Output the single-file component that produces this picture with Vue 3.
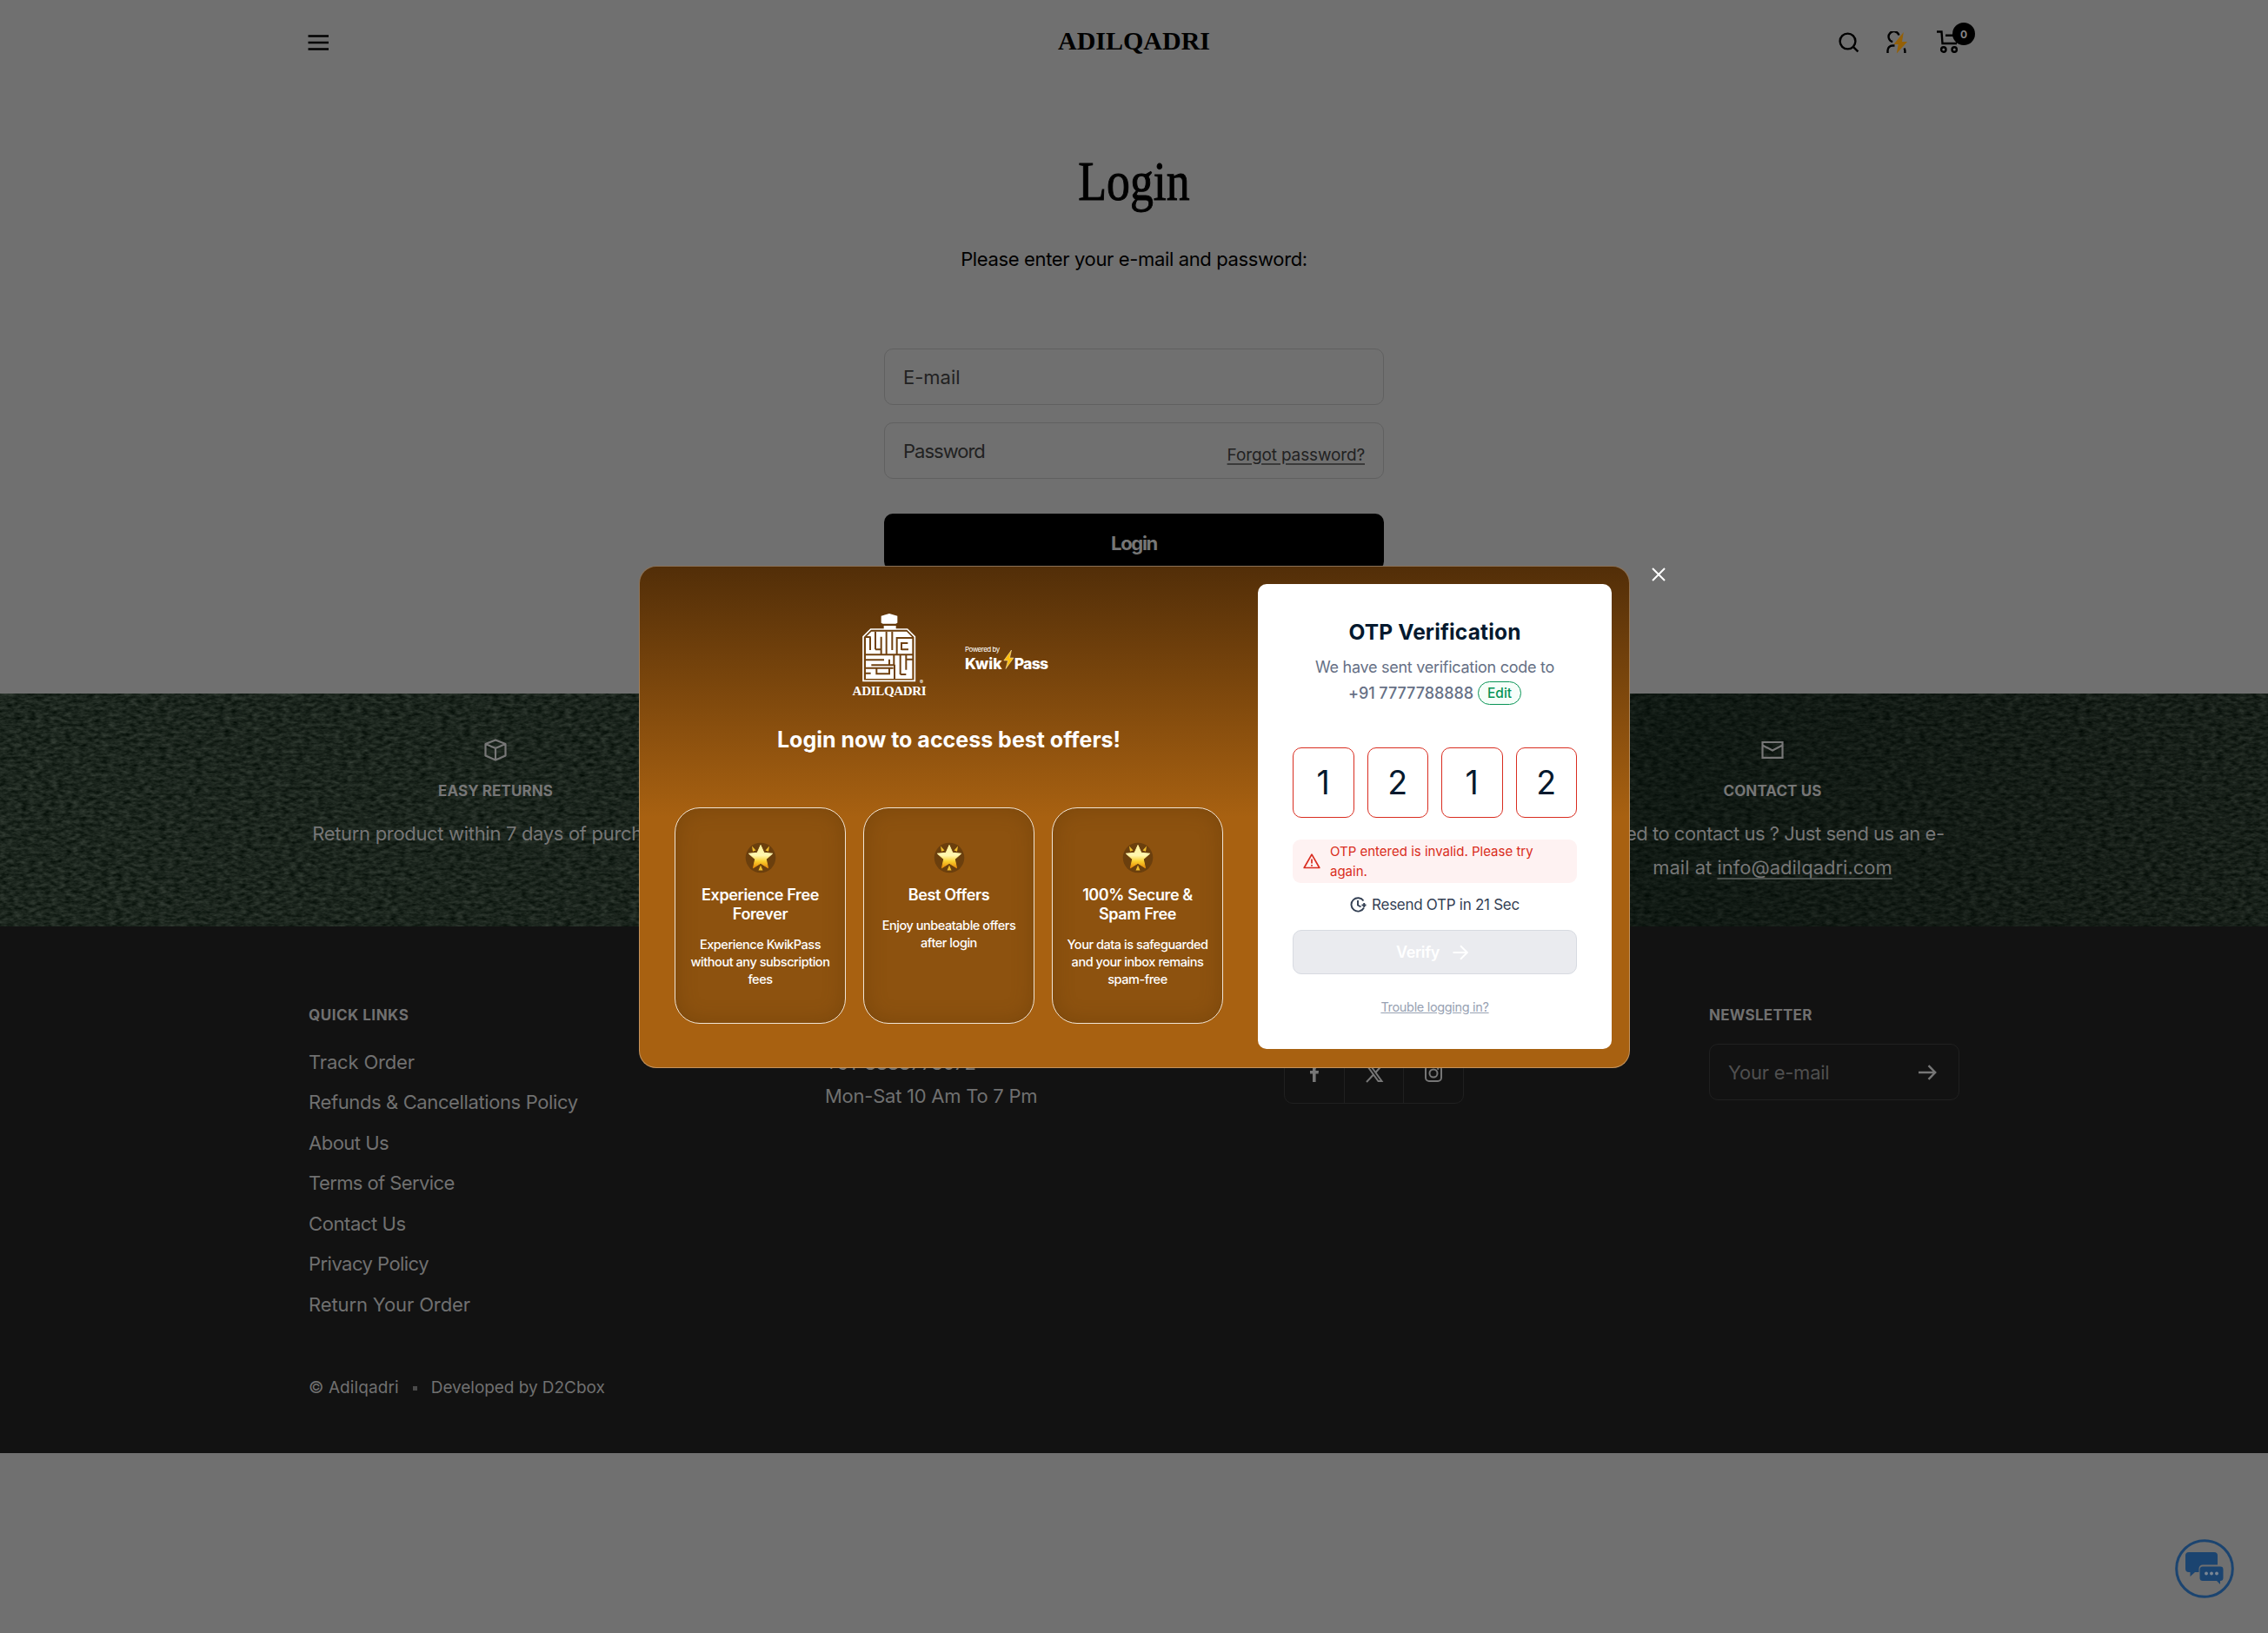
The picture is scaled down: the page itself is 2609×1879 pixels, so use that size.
<script setup>
const links = [
  { t: 'Track Order', ls: -0.17 },
  { t: 'Refunds & Cancellations Policy', ls: -0.38 },
  { t: 'About Us', ls: -0.5 },
  { t: 'Terms of Service', ls: -0.59 },
  { t: 'Contact Us', ls: -0.41 },
  { t: 'Privacy Policy', ls: -0.54 },
  { t: 'Return Your Order', ls: -0.12 },
]
const perks = [
  { title: ['Experience Free', 'Forever'], text: ['Experience KwikPass', 'without any subscription', 'fees'] },
  { title: ['Best Offers'], text: ['Enjoy unbeatable offers', 'after login'] },
  { title: ['100% Secure &', 'Spam Free'], text: ['Your data is safeguarded', 'and your inbox remains', 'spam-free'] },
]
const digits = ['1', '2', '1', '2']
</script>

<template>
  <div class="page">
    <header class="header">
      <svg class="menu" width="24" height="18" viewBox="0 0 24 18"><path d="M.5 1.500H24M.5 9H24M.5 16.500H24" stroke="#000" stroke-width="2.400" /></svg>
      <div class="brand">ADILQADRI</div>
      <div class="tools">
        <svg width="24" height="24" viewBox="0 0 24 24" fill="none" stroke="#000" stroke-width="2.400"><circle cx="10.500" cy="10.500" r="8.900" /><path d="M16.800 16.800l5.600 5.600" /></svg>
        <svg width="26" height="26" viewBox="0 0 26 26" fill="none" stroke="#000" stroke-width="2.400"><path d="M8.200 12.200A6.100 6.100 0 1 1 15.500 4.500" /><path d="M2.500 25v-3a5.500 5.500 0 0 1 5.500-5.500h2.500M21.500 19.500q.9 1.500.9 3v2.500" /><path d="M20.800 1 9.500 15h5.200L12.800 25.500 25 12h-6z" fill="#946008" stroke="none" /></svg>
        <div class="cart">
          <svg width="28" height="27" viewBox="0 0 28 27" fill="none" stroke="#000" stroke-width="2.400"><path d="M0 1.500h5.500l1 13.500h16.500M10 5.800h13" /><circle cx="7.800" cy="22" r="2.700" /><circle cx="20.200" cy="22" r="2.700" /></svg>
          <span class="badge">0</span>
        </div>
      </div>
    </header>

    <main class="login">
      <h1>Login</h1>
      <p class="lead">Please enter your e-mail and password:</p>
      <form class="form" @submit.prevent>
        <div class="field"><span>E-mail</span></div>
        <div class="field"><span class="pw">Password</span><a class="forgot">Forgot password?</a></div>
        <button class="submit">Login</button>
      </form>
    </main>

    <section class="band">
      <svg class="leather" width="2609" height="268" preserveAspectRatio="none">
        <defs>
          <filter id="grain" x="0" y="0" width="100%" height="100%" color-interpolation-filters="sRGB">
            <feTurbulence type="fractalNoise" baseFrequency="0.12 0.26" numOctaves="3" seed="8" />
            <feColorMatrix type="matrix" values=".24 .05 0 0 -.035  .24 .05 0 0 .004  .23 .05 0 0 -.022  0 0 0 0 1" />
          </filter>
          <linearGradient id="shade"><stop offset="0" stop-color="#000" stop-opacity="0" /><stop offset=".3" stop-color="#000" stop-opacity=".05" /><stop offset=".74" stop-color="#000805" stop-opacity=".42" /><stop offset="1" stop-color="#000" stop-opacity=".15" /></linearGradient>
        </defs>
        <rect width="2609" height="268" filter="url(#grain)" />
        <rect width="2609" height="268" fill="url(#shade)" />
      </svg>
      <div class="features">
        <div class="feature">
          <svg width="26" height="26" viewBox="0 0 26 26" fill="none" stroke="#767676" stroke-width="2.200" stroke-linejoin="round"><path d="M13 1.500 24.500 6v13.500L13 24.500 1.500 19.500V6zM1.500 6 13 11l11.500-5M13 11v13.500" /></svg>
          <h3>EASY RETURNS</h3>
          <p>Return product within 7 days of purchase.</p>
        </div>
        <div class="feature last">
          <svg width="26" height="26" viewBox="0 0 26 26" fill="none" stroke="#767676" stroke-width="2.200"><path d="M1.500 4h23v17.800h-23zM1.500 7.500 13 13.500l11.500-6" /></svg>
          <h3>CONTACT US</h3>
          <p>Need to contact us ? Just send us an e-<br /><span class="mailto">mail at <u>info@adilqadri.com</u></span></p>
        </div>
      </div>
    </section>

    <footer class="footer">
      <div class="cols">
        <div class="col quick">
          <h4>QUICK LINKS</h4>
          <ul><li v-for="l in links" :key="l.t" :style="{ letterSpacing: l.ls + 'px' }">{{ l.t }}</li></ul>
        </div>
        <div class="col hours"><p class="tel">+91-8888778072</p><p>Mon-Sat 10 Am To 7 Pm</p></div>
        <div class="col social">
          <span><svg width="22" height="22" viewBox="0 0 22 22"><path d="M9 21v-9.500H6V8h3V5.500Q9 1.500 13 1.500h3v3.200h-2q-1.500 0-1.500 1.500V8H16l-.4 3.500h-3V21z" fill="#767676" /></svg></span>
          <span><svg width="22" height="22" viewBox="0 0 22 22" fill="none" stroke="#767676" stroke-width="2"><path d="M2.500 2h4l13 18h-4zM20 1.500 12 10.500M9.500 13 2 21" /></svg></span>
          <span><svg width="22" height="22" viewBox="0 0 22 22" fill="none" stroke="#767676" stroke-width="2"><rect x="2" y="2" width="18" height="18" rx="4" /><circle cx="11" cy="11" r="4.500" /><circle cx="16.200" cy="5.800" r=".8" fill="#767676" stroke-width="1" /></svg></span>
        </div>
        <div class="col news">
          <h4>NEWSLETTER</h4>
          <div class="mail"><span>Your e-mail</span><svg width="21" height="18" viewBox="0 0 21 18" fill="none" stroke="#767676" stroke-width="2.400"><path d="M0 9h19M11.500 1.200 19.200 9l-7.700 7.800" /></svg></div>
        </div>
      </div>
      <div class="copy"><span>© Adilqadri</span><i></i><span>Developed by D2Cbox</span></div>
    </footer>

    <svg class="chat" width="70" height="70" viewBox="0 0 70 70"><circle cx="35" cy="35" r="32.300" fill="none" stroke="#1b4470" stroke-width="3" /><path d="M17 16h29a4 4 0 0 1 4 4v10.500H33a4.500 4.500 0 0 0-4.500 4.500v4H24l-5.500 5v-5H17a4 4 0 0 1-4-4V20a4 4 0 0 1 4-4z" fill="#1b4470" /><path d="M33 32.500h20a3.500 3.500 0 0 1 3.500 3.500v9.500A3.500 3.500 0 0 1 53 49v4l-4-4H33a3.500 3.500 0 0 1-3.500-3.500V36a3.500 3.500 0 0 1 3.500-3.500z" fill="#1b4470" /><g fill="#7b8794"><circle cx="37" cy="40.500" r="1.900" /><circle cx="43" cy="40.500" r="1.900" /><circle cx="49" cy="40.500" r="1.900" /></g></svg>

    <div class="modal">
      <section class="promo">
        <div class="logos">
          <div class="bottle">
            <svg width="64" height="81" viewBox="0 0 192 243">
              <path d="M68 8 96 0l28 8v24l-6 3H74l-6-3zM77 42h42v12H77z" fill="#fff" />
              <path d="M6 80 32 54h126l26 26v152H6z" fill="none" stroke="#fff" stroke-width="5" />
              <path d="M15 82 34 62h122l19 20v143H15z" fill="#fff" />
              <path d="M12 142h166M48 62v62M30 82v44M12 81h20M68 80v44H48M86 62v80M68 124v18M106 62v64M122 142V84h56M138 126v-24h22M138 124h24M12 160h66M34 178h78V142M96 158v18M12 188h98M114 176v50M134 142v68M134 210h20M154 158h24M154 142v52M12 206h20M52 188v20h44v-20" fill="none" stroke="#704110" stroke-width="6" />
            </svg>
            <b>ADILQADRI</b><sup>®</sup>
          </div>
          <div class="kwik">
            <small>Powered by</small>
            <div><b>Kwik</b><svg width="13" height="22" viewBox="0 0 13 22"><path d="M9.500 0 .8 12h4.700L3 21.500 12 9H7.500z" fill="#ffbe0a" stroke="#fff3c4" stroke-width=".5" /></svg><b class="pass">Pass</b></div>
          </div>
        </div>
        <h2>Login now to access best offers!</h2>
        <div class="perks">
          <article v-for="p in perks" :key="p.title[0]">
            <svg width="36" height="36" viewBox="0 0 36 36">
              <defs><linearGradient id="gold" x2="0" y2="1"><stop offset="0" stop-color="#fff3a0" /><stop offset=".45" stop-color="#fff7b0" /><stop offset=".7" stop-color="#fbd130" /><stop offset="1" stop-color="#e88a08" /></linearGradient></defs>
              <circle cx="18" cy="18" r="17.300" fill="#6b3f0d" />
              <path d="m18 3.500 3.900 8.800 9.700.9-7.300 6.500 2.200 10L18 24.300 9.500 29.700l2.200-10L4.400 13.200l9.700-.9z" fill="url(#gold)" stroke="url(#gold)" stroke-linejoin="round" />
              <path d="m8 4.500 4.500 5-3.500 1.200zM28 4.500l-4.500 5 3.500 1.200zM18 26.500l2.500 6h-5z" fill="#eebb2a" />
            </svg>
            <h3><template v-for="(t, i) in p.title" :key="t"><br v-if="i" />{{ t }}</template></h3>
            <p><template v-for="(t, i) in p.text" :key="t"><br v-if="i" />{{ t }}</template></p>
          </article>
        </div>
      </section>

      <section class="otp">
        <h2>OTP Verification</h2>
        <p class="sent">We have sent verification code to</p>
        <div class="phone"><b>+91 7777788888</b><button>Edit</button></div>
        <div class="digits"><span v-for="(d, i) in digits" :key="i">{{ d }}</span></div>
        <div class="error">
          <svg width="20" height="18" viewBox="0 0 20 18" fill="none" stroke="#d92d20" stroke-width="1.700" stroke-linejoin="round"><path d="M10 1.200 18.800 16.500H1.200zM10 6.500v5M10 13v1.700" /></svg>
          <p>OTP entered is invalid. Please try<br />again.</p>
        </div>
        <div class="resend">
          <svg width="19" height="18" viewBox="0 0 19 18" fill="none" stroke="#344054" stroke-width="1.900"><path d="M15.500 4.500A7.700 7.700 0 1 0 16 12.500M9 4v5.500l3.500 2M13.500 9.500h5M16.200 7v5" /></svg>
          <span>Resend OTP in 21 Sec</span>
        </div>
        <button class="verify"><span>Verify</span><svg width="18" height="18" viewBox="0 0 18 18" fill="none" stroke="#fff" stroke-width="2"><path d="M.5 9h16M9 1.200 16.800 9 9 16.800" /></svg></button>
        <a class="trouble">Trouble logging in?</a>
      </section>
      <svg class="close" width="16" height="16" viewBox="0 0 16 16" stroke="#fff" stroke-width="2"><path d="M1 1l14 14M15 1 1 15" /></svg>
    </div>
  </div>
</template>

<style>
body { margin: 0; background: #707070; }
</style>

<style scoped>
.page { position: relative; width: 2609px; height: 1879px; overflow: hidden; background: #707070; color: #000; font-family: Inter, "Liberation Sans", sans-serif; font-size: 22px; }
h1, h2, h3, h4, p, ul { margin: 0; padding: 0; font-weight: 400; white-space: nowrap; }
button { font: inherit; border: 0; padding: 0; }
svg { display: block; flex: none; }
span { white-space: nowrap; }

.header { box-sizing: border-box; height: 97px; padding: 0 354px; display: grid; grid-template-columns: 1fr auto 1fr; align-items: center; }
.brand { font: 700 30px/40px "Liberation Serif", serif; margin-top: -4px; }
.tools { display: flex; justify-content: flex-end; align-items: center; }
.tools > svg + svg { margin-left: 30px; }
.cart { position: relative; margin: 0 -1px 0 33px; width: 28px; }
.badge { position: absolute; left: 18px; top: -9px; width: 26px; height: 26px; border-radius: 50%; background: #000; color: #858585; font: 700 12px/27px Inter, sans-serif; text-align: center; }

.login { height: 701px; display: flex; flex-direction: column; align-items: center; }
.login h1 { margin-top: 72px; font: 400 64px/80px "Liberation Serif", serif; transform: scaleX(.84); -webkit-text-stroke: 1px #000; }
.lead { margin-top: 34px; line-height: 30px; letter-spacing: -.36px; }
.form { width: 575px; margin-top: 88px; display: flex; flex-direction: column; }
.field { box-sizing: border-box; height: 65px; margin-bottom: 20px; border: 1px solid #606060; border-radius: 10px; padding: 0 21px; display: flex; align-items: center; justify-content: space-between; color: #222; }
.pw { letter-spacing: -1px; }
.forgot { font-size: 19px; line-height: 24px; margin-top: 10px; letter-spacing: -.140px; text-decoration: underline; text-decoration-color: #3a3a3a; text-decoration-thickness: 1.500px; text-underline-offset: 3px; }
.submit { margin-top: 20px; height: 65px; padding-top: 2px; border-radius: 10px; background: #000; color: #767676; font-weight: 700; letter-spacing: -1.300px; }

.band { position: relative; height: 268px; background: #18231d; color: #767676; }
.leather { position: absolute; inset: 0; }
.features { position: relative; margin: 0 325px; display: flex; justify-content: space-between; text-align: center; }
.feature { width: 490px; padding-top: 52px; display: flex; flex-direction: column; align-items: center; }
.feature h3 { margin-top: 23px; font-size: 17px; line-height: 22px; font-weight: 700; letter-spacing: .1px; }
.feature p { margin-top: 19px; line-height: 39px; letter-spacing: -.32px; }
.feature.last p { letter-spacing: -.48px; }
.feature .mailto { letter-spacing: 0; }
.feature u { text-decoration-thickness: 1.500px; text-underline-offset: 4px; text-decoration-color: #4b514d; }

.footer { height: 606px; background: #121212; color: #707070; }
.cols { margin: 0 355px; padding-top: 90px; height: 439px; box-sizing: border-box; display: flex; align-items: flex-start; }
.col h4 { font-size: 17px; line-height: 24px; font-weight: 700; letter-spacing: .5px; }
.quick { width: 594px; }
.quick ul { list-style: none; margin-top: 18.500px; }
.quick li { line-height: 46.500px; }
.hours { width: 528px; padding-top: 47px; line-height: 39px; letter-spacing: -.25px; }
.hours .tel { padding-top: 1px; height: 38px; letter-spacing: -.44px; }
.social { box-sizing: border-box; display: flex; margin-top: 48px; width: 207px; height: 66px; padding-bottom: 2px; border: 1px solid #202020; border-radius: 10px; }
.social span { flex: 1; display: flex; align-items: center; justify-content: center; margin-bottom: -2px; padding-bottom: 4px; }
.social span + span { border-left: 1px solid #202020; }
.news { margin-left: auto; width: 288px; }
.news h4 { letter-spacing: .25px; }
.mail { box-sizing: border-box; height: 65px; margin-top: 21px; border: 1px solid #202020; border-radius: 10px; padding: 0 25px 0 21px; display: flex; align-items: center; justify-content: space-between; color: #4f4f4f; letter-spacing: -.25px; }
.copy { margin: 0 355px; padding-top: 80px; display: flex; align-items: center; font-size: 19px; line-height: 24px; letter-spacing: .1px; }
.copy i { width: 5px; height: 5px; background: #4a4a4a; margin: 0 16px; }
.copy i + span { letter-spacing: -.05px; }
.chat { position: absolute; left: 2501px; top: 1770px; }

.modal { position: absolute; left: 735px; top: 651px; box-sizing: border-box; width: 1140px; height: 578px; border: 1px solid rgba(255, 255, 255, .32); border-radius: 20px; background: linear-gradient(#522e08, #a86111 50%, #a86111) border-box; display: flex; color: #fff; }
.promo { width: 711px; display: flex; flex-direction: column; align-items: center; }
.logos { display: flex; width: 228px; margin: 54px 0 0 5px; height: 101px; justify-content: space-between; }
.bottle { position: relative; width: 86px; display: flex; flex-direction: column; align-items: center; }
.bottle b { font: 700 15px/16px "Liberation Serif", serif; letter-spacing: -.3px; }
.bottle sup { position: absolute; right: 4px; top: 75px; font-size: 6px; line-height: 8px; }
.kwik { width: 98px; padding-top: 36px; }
.kwik small { display: block; font-size: 8px; line-height: 10px; letter-spacing: -.5px; }
.kwik div { display: flex; align-items: center; font-size: 17.500px; line-height: 20px; height: 20px; font-weight: 800; }
.kwik div b { margin-top: 3px; font-weight: 800; letter-spacing: .1px; }
.kwik div .pass { letter-spacing: -.7px; }
.kwik svg { margin: -6px 0 0 1px; }
.promo > h2 { margin-top: 28px; font-size: 25px; line-height: 32px; font-weight: 700; }
.perks { display: flex; gap: 20px; margin-top: 62px; }
.perks article { box-sizing: border-box; width: 197px; height: 249px; border: 1.500px solid #f0e4d4; border-radius: 29px; background: #8d520f; box-shadow: inset 0 0 24px rgba(80, 45, 5, .3); padding-top: 39px; text-align: center; display: flex; flex-direction: column; align-items: center; }
.perks h3 { margin-top: 14px; font-size: 18px; line-height: 22px; font-weight: 600; letter-spacing: -.38px; }
.perks p { margin-top: 14px; font-size: 14.500px; line-height: 20px; font-weight: 500; letter-spacing: -.45px; }

.otp { width: 407px; height: 535px; margin-top: 20px; box-sizing: border-box; padding: 0 40px; border-radius: 10px; background: #fff; display: flex; flex-direction: column; align-items: center; color: #667085; }
.otp h2 { margin-top: 39px; font-size: 24.500px; line-height: 32px; font-weight: 700; letter-spacing: .15px; color: #04192e; }
.sent { margin-top: 12px; font-size: 18px; line-height: 26px; letter-spacing: -.27px; }
.phone { margin-top: 2px; display: flex; align-items: center; gap: 5px; height: 28px; font-size: 18px; }
.phone b { font-weight: 500; letter-spacing: -.05px; }
.phone button { box-sizing: border-box; width: 50px; height: 27px; border: 1.500px solid #079455; border-radius: 14px; background: #f6fef9; color: #079455; font-size: 15.500px; line-height: 25px; font-weight: 500; }
.digits { margin-top: 49px; width: 327px; display: flex; justify-content: space-between; }
.digits span { box-sizing: border-box; width: 70.500px; height: 81px; border: 1.500px solid #d92d20; border-radius: 10px; font-size: 37.500px; line-height: 79px; text-align: center; color: #04192e; }
.error { box-sizing: border-box; width: 327px; height: 50px; margin-top: 25px; border-radius: 9px; background: #fef2f2; color: #d92d20; padding-left: 12px; display: flex; align-items: center; gap: 11px; font-size: 15px; line-height: 23px; }
.error p { margin-top: -1px; }
.resend { margin-top: 13px; display: flex; align-items: center; gap: 6px; font-size: 17px; line-height: 24px; letter-spacing: -.28px; color: #344054; }
.verify { box-sizing: border-box; width: 327px; height: 51px; margin-top: 17px; border: 1.500px solid #d7dae1; border-radius: 10px; background: #eaebef; color: #fff; font-weight: 600; font-size: 18px; letter-spacing: -.4px; display: flex; align-items: center; justify-content: center; gap: 15px; padding-right: 6px; }
.trouble { margin-top: 28px; font-size: 14.500px; line-height: 20px; letter-spacing: -.33px; color: #98a2b3; text-decoration: underline; }
.close { position: absolute; left: 1164px; top: 1px; }
</style>
